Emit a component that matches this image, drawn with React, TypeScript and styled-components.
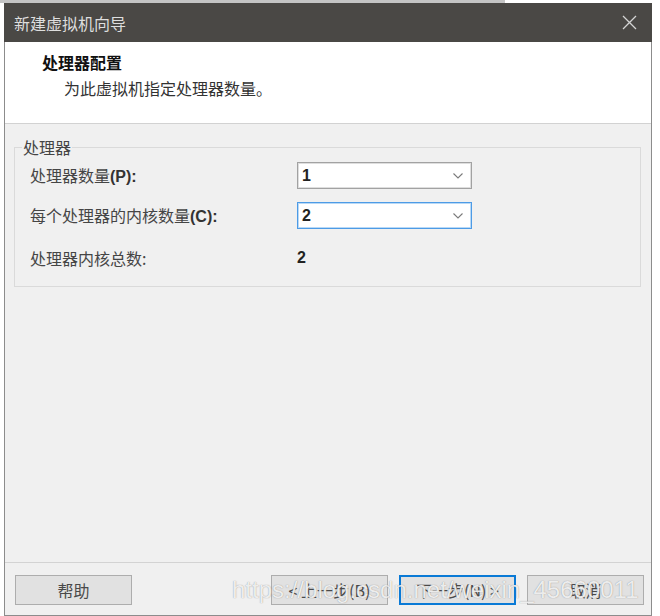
import React from 'react';
import styled, { createGlobalStyle } from 'styled-components';

const GlobalStyle = createGlobalStyle`
  html, body {
    margin: 0;
    padding: 0;
    background: #ffffff;
  }
  body {
    width: 660px;
    height: 616px;
    overflow: hidden;
    font-family: "Noto Sans CJK SC", "Noto Sans", sans-serif;
  }
  * {
    box-sizing: border-box;
  }
`;

const TopStrip = styled.div`
  width: 505px;
  height: 3px;
  background: #c4c4c4;
`;

const Window = styled.div`
  margin-left: 4px;
  width: 648px;
  height: 613px;
  display: flex;
  flex-direction: column;
`;

const TitleBar = styled.div`
  height: 39px;
  flex-shrink: 0;
  background: #4a4845;
  display: flex;
  align-items: center;
  justify-content: space-between;
  padding: 0 15px 0 10px;
`;

const TitleText = styled.div`
  color: #dedede;
  font-size: 16px;
  line-height: 20px;
`;

const Frame = styled.div`
  flex: 1;
  display: flex;
  flex-direction: column;
  border-left: 1px solid #8c8c8c;
  border-right: 1px solid #8c8c8c;
  border-bottom: 1px solid #8c8c8c;
`;

const Header = styled.div`
  height: 82px;
  flex-shrink: 0;
  background: #ffffff;
  border-bottom: 1px solid #d2d2d2;
  padding: 10px 0 0 37px;
`;

const HeaderTitle = styled.div`
  font-size: 16px;
  line-height: 20px;
  font-weight: 700;
  color: #111;
`;

const HeaderSub = styled.div`
  margin-top: 6px;
  padding-left: 22px;
  font-size: 16px;
  line-height: 20px;
  color: #333;
`;

const Body = styled.div`
  flex: 1;
  background: #f0f0f0;
  padding: 15px 10px 0 9px;
`;

const Group = styled.fieldset`
  margin: 0;
  padding: 0 0 15px 15px;
  border: 1px solid #dadada;
  min-width: 0;
`;

const Legend = styled.legend`
  margin-left: -8px;
  padding: 0 1px;
  font-size: 16px;
  line-height: 16px;
  color: #444;
`;

const Row = styled.div<{ $top: number }>`
  display: grid;
  grid-template-columns: 267px 175px;
  align-items: center;
  height: 27px;
  margin-top: ${p => p.$top}px;
`;

const Label = styled.div`
  font-size: 16px;
  line-height: 20px;
  color: #454545;
  white-space: nowrap;
`;

const Key = styled.span`
  font-family: "Liberation Sans", Arial, sans-serif;
  font-weight: 700;
  color: #333;
`;

const Select = styled.div<{ $focused?: boolean }>`
  height: 27px;
  background: #ffffff;
  border: 1px solid ${p => (p.$focused ? '#4d9be6' : '#a2a2a2')};
  box-shadow: inset 0 0 0 1px ${p => (p.$focused ? '#b9d9f6' : '#dedede')};
  display: flex;
  align-items: center;
  justify-content: space-between;
  padding: 0 8px 0 4px;
`;

const Value = styled.span`
  font-family: "Liberation Sans", Arial, sans-serif;
  font-weight: 700;
  font-size: 16px;
  color: #222;
`;

const Footer = styled.div`
  position: relative;
  height: 53px;
  flex-shrink: 0;
  background: #f0f0f0;
  border-top: 1px solid #d3d3d3;
  display: flex;
  align-items: flex-start;
  padding: 12px 7px 0 10px;
`;

const Spacer = styled.div`
  flex: 1;
`;

const ButtonGroup = styled.div`
  display: flex;
  gap: 11px;
`;

const Button = styled.button<{ $primary?: boolean }>`
  width: 117px;
  height: 30px;
  margin: 0;
  padding: 0;
  background: #e1e1e1;
  border: ${p => (p.$primary ? '2px solid #0a7ad6' : '1px solid #adadad')};
  font-family: "Noto Sans CJK SC", "Noto Sans", sans-serif;
  font-size: 16px;
  line-height: 20px;
  color: #4a4a4a;
`;

const Watermark = styled.div`
  position: absolute;
  left: 227px;
  top: 12px;
  font-family: "Liberation Sans", Arial, sans-serif;
  font-size: 24px;
  line-height: 30px;
  color: rgba(255, 255, 255, 0.85);
  text-shadow: 0 0 1px rgba(90, 90, 90, 0.7);
  pointer-events: none;
  white-space: nowrap;
`;

const CloseIcon = () => (
  <svg width="15" height="15" viewBox="0 0 15 15">
    <path d="M1 1 L14 14 M14 1 L1 14" stroke="#d4d4d4" strokeWidth="1.3" fill="none" />
  </svg>
);

const Chevron = () => (
  <svg width="10" height="6" viewBox="0 0 10 6">
    <polyline points="0.5,0.5 5,5 9.5,0.5" stroke="#7a7a7a" strokeWidth="1.1" fill="none" />
  </svg>
);

export default function App() {
  return (
    <>
      <GlobalStyle />
      <TopStrip />
      <Window>
        <TitleBar>
          <TitleText>新建虚拟机向导</TitleText>
          <CloseIcon />
        </TitleBar>
        <Frame>
          <Header>
            <HeaderTitle>处理器配置</HeaderTitle>
            <HeaderSub>为此虚拟机指定处理器数量。</HeaderSub>
          </Header>
          <Body>
            <Group>
              <Legend>处理器</Legend>
              <Row $top={7}>
                <Label>处理器数量<Key>(P):</Key></Label>
                <Select>
                  <Value>1</Value>
                  <Chevron />
                </Select>
              </Row>
              <Row $top={13}>
                <Label>每个处理器的内核数量<Key>(C):</Key></Label>
                <Select $focused>
                  <Value>2</Value>
                  <Chevron />
                </Select>
              </Row>
              <Row $top={15}>
                <Label>处理器内核总数:</Label>
                <Value>2</Value>
              </Row>
            </Group>
          </Body>
          <Footer>
            <Button>帮助</Button>
            <Spacer />
            <ButtonGroup>
              <Button>&lt; 上一步(B)</Button>
              <Button $primary>下一步(N) &gt;</Button>
              <Button>取消</Button>
            </ButtonGroup>
            <Watermark>https://blog.csdn.net/weixin_45660011</Watermark>
          </Footer>
        </Frame>
      </Window>
    </>
  );
}
